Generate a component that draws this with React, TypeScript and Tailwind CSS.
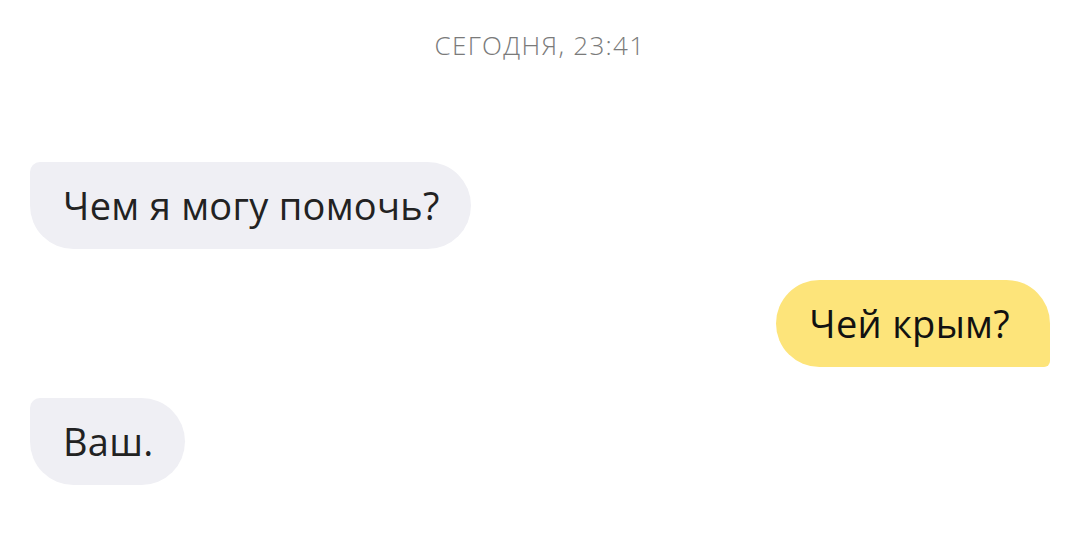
import React from 'react';

const Incoming = ({ text }: { text: string }) => (
  <div className="flex justify-start">
    <div className="h-[87px] flex items-center pl-[33px] pr-[31px] bg-[#efeff4] rounded-[44px] rounded-tl-[10px] text-[#222] text-[38px] tracking-[0.3px]">
      {text}
    </div>
  </div>
);

const Outgoing = ({ text }: { text: string }) => (
  <div className="flex justify-end">
    <div className="h-[87px] flex items-center pl-[33px] pr-[40px] bg-[#fde47a] rounded-[44px] rounded-br-[6px] text-[#111] text-[38px] tracking-[0.3px]">
      {text}
    </div>
  </div>
);

const App = () => {
  return (
    <div className="w-[1080px] h-[557px] bg-white px-[30px] font-['Open_Sans','Noto_Sans',sans-serif]">
      <div className="pt-[28px] text-center text-[26px] text-[#7a7a7a] font-light tracking-[1.3px] leading-[34px]">
        СЕГОДНЯ, 23:41
      </div>
      <div className="mt-[100px] flex flex-col gap-[31px]">
        <Incoming text="Чем я могу помочь?" />
        <Outgoing text="Чей крым?" />
        <Incoming text="Ваш." />
      </div>
    </div>
  );
};

export default App;
